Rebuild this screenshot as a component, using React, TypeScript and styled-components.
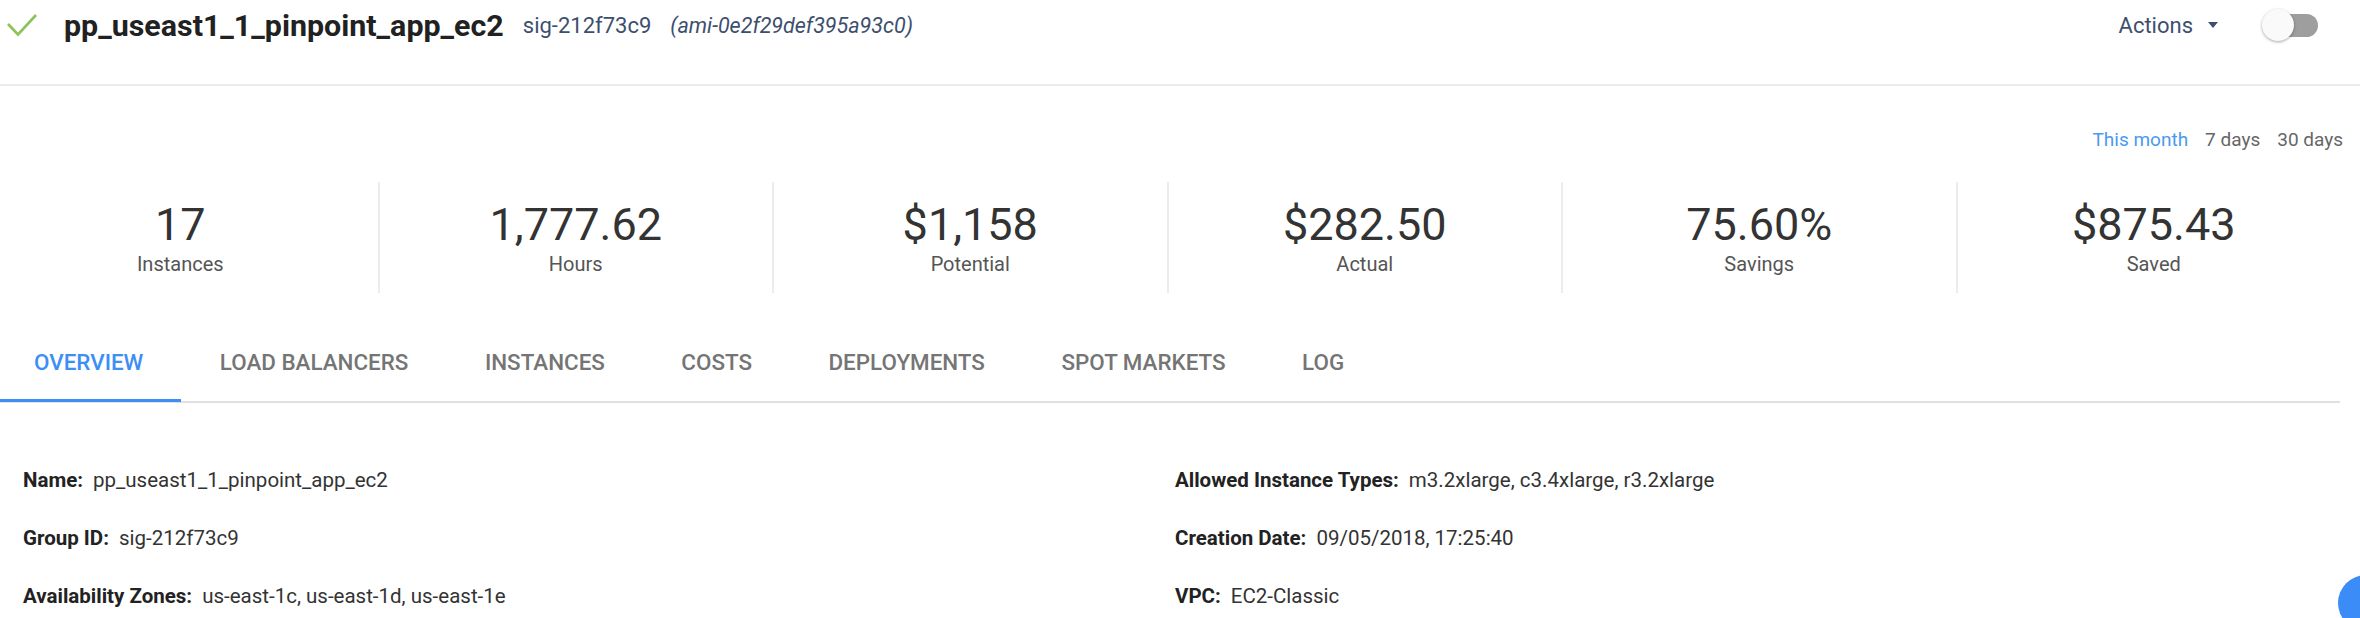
import React from 'react'
import styled, { createGlobalStyle } from 'styled-components'

const GlobalStyle = createGlobalStyle`
	body {
		margin: 0;
		background: #fff;
		font-family: Roboto, 'Liberation Sans', sans-serif;
		color: #333;
		overflow: hidden;
	}
	* {
		box-sizing: border-box;
	}
`

const Header = styled.header`
	display: flex;
	align-items: center;
	height: 86px;
	padding: 0 42px 34px 6px;
	border-bottom: 2px solid #ebebeb;
`

const CheckIcon = styled.svg`
	flex: none;
`

const Title = styled.h1`
	margin: 0 0 0 26px;
	font-size: 30.4px;
	font-weight: 700;
	color: #212121;
`

const SubId = styled.span<{ $italic?: boolean }>`
	margin-left: 19px;
	font-size: ${(p) => (p.$italic ? '21.5px' : '22px')};
	color: #3d4f6e;
	font-style: ${(p) => (p.$italic ? 'italic' : 'normal')};
`

const Spacer = styled.div`
	flex: 1;
`

const ActionsButton = styled.button`
	display: flex;
	align-items: center;
	gap: 15px;
	border: 0;
	background: none;
	padding: 0;
	font-family: inherit;
	font-size: 22px;
	color: #3d4f6e;
`

const Caret = styled.span`
	width: 0;
	height: 0;
	border-left: 5px solid transparent;
	border-right: 5px solid transparent;
	border-top: 6px solid #3d4f6e;
`

const Switch = styled.div`
	position: relative;
	margin-left: 44px;
	width: 56px;
	height: 32px;
	display: flex;
	align-items: center;
	justify-content: flex-end;
`

const Track = styled.div`
	width: 48px;
	height: 23px;
	border-radius: 12px;
	background: #9e9e9e;
`

const Thumb = styled.div`
	position: absolute;
	left: 0;
	top: 0;
	width: 32px;
	height: 32px;
	border-radius: 50%;
	background: #fafafa;
	box-shadow: 0 1px 3px rgba(0, 0, 0, 0.35);
`

const PeriodBar = styled.div`
	display: flex;
	justify-content: flex-end;
	padding: 42px 17px 0 0;
	height: 66px;
	line-height: 24px;
`

const Period = styled.span<{ $active?: boolean }>`
	margin-left: 17px;
	font-size: 19px;
	color: ${(p) => (p.$active ? '#4a9af0' : '#666')};
`

const Stats = styled.div`
	display: grid;
	grid-template-columns: repeat(6, 1fr);
	margin: 30px 10px 0 -17px;
`

const Stat = styled.div<{ $first?: boolean }>`
	display: flex;
	flex-direction: column;
	align-items: center;
	height: 111px;
	padding-top: 16px;
	border-left: ${(p) => (p.$first ? 'none' : '2px solid #ececec')};
`

const StatValue = styled.div`
	font-size: 45px;
	line-height: 54px;
	color: #333;
`

const StatLabel = styled.div`
	font-size: 20px;
	line-height: 24px;
	color: #555;
`

const TabBar = styled.nav`
	display: flex;
	margin: 32px 20px 0 0;
	border-bottom: 2px solid #e0e0e0;
`

const Tab = styled.div<{ $active?: boolean; $first?: boolean }>`
	display: flex;
	align-items: center;
	height: 77px;
	padding: 0 38px 0 ${(p) => (p.$first ? '34px' : '38.5px')};
	margin-bottom: -1px;
	font-size: 22.4px;
	font-weight: 500;
	text-transform: uppercase;
	color: ${(p) => (p.$active ? '#3d8ef5' : '#757575')};
	border-bottom: 3px solid ${(p) => (p.$active ? '#3d8ef5' : 'transparent')};
`

const Details = styled.section`
	display: grid;
	grid-template-columns: 1152px 1fr;
	row-gap: 34px;
	padding: 65px 0 0 23px;
`

const Field = styled.div`
	display: flex;
	gap: 10px;
	font-size: 20.5px;
	line-height: 24px;
	color: #333;
`

const FieldLabel = styled.span`
	font-weight: 700;
	color: #222;
`

const Fab = styled.div`
	position: fixed;
	right: -34px;
	bottom: -13px;
	width: 56px;
	height: 56px;
	border-radius: 50%;
	background: #3b8cf6;
`

const stats = [
	{ value: '17', label: 'Instances' },
	{ value: '1,777.62', label: 'Hours' },
	{ value: '$1,158', label: 'Potential' },
	{ value: '$282.50', label: 'Actual' },
	{ value: '75.60%', label: 'Savings' },
	{ value: '$875.43', label: 'Saved' },
]

const tabs = ['Overview', 'Load balancers', 'Instances', 'Costs', 'Deployments', 'Spot markets', 'Log']

const fields = [
	['Name:', 'pp_useast1_1_pinpoint_app_ec2'],
	['Allowed Instance Types:', 'm3.2xlarge, c3.4xlarge, r3.2xlarge'],
	['Group ID:', 'sig-212f73c9'],
	['Creation Date:', '09/05/2018, 17:25:40'],
	['Availability Zones:', 'us-east-1c, us-east-1d, us-east-1e'],
	['VPC:', 'EC2-Classic'],
]

export default function App() {
	return (
		<>
			<GlobalStyle />
			<Header>
				<CheckIcon width="32" height="26" viewBox="0 0 32 26">
					<polyline points="2,12 12,22.5 30,3" fill="none" stroke="#8cc45a" strokeWidth="2.6" />
				</CheckIcon>
				<Title>pp_useast1_1_pinpoint_app_ec2</Title>
				<SubId>sig-212f73c9</SubId>
				<SubId $italic>(ami-0e2f29def395a93c0)</SubId>
				<Spacer />
				<ActionsButton>
					Actions
					<Caret />
				</ActionsButton>
				<Switch>
					<Track />
					<Thumb />
				</Switch>
			</Header>
			<PeriodBar>
				<Period $active>This month</Period>
				<Period>7 days</Period>
				<Period>30 days</Period>
			</PeriodBar>
			<Stats>
				{stats.map((s, i) => (
					<Stat key={s.label} $first={i === 0}>
						<StatValue>{s.value}</StatValue>
						<StatLabel>{s.label}</StatLabel>
					</Stat>
				))}
			</Stats>
			<TabBar>
				{tabs.map((t, i) => (
					<Tab key={t} $active={i === 0} $first={i === 0}>
						{t}
					</Tab>
				))}
			</TabBar>
			<Details>
				{fields.map(([label, value]) => (
					<Field key={label}>
						<FieldLabel>{label}</FieldLabel>
						<span>{value}</span>
					</Field>
				))}
			</Details>
			<Fab />
		</>
	)
}
